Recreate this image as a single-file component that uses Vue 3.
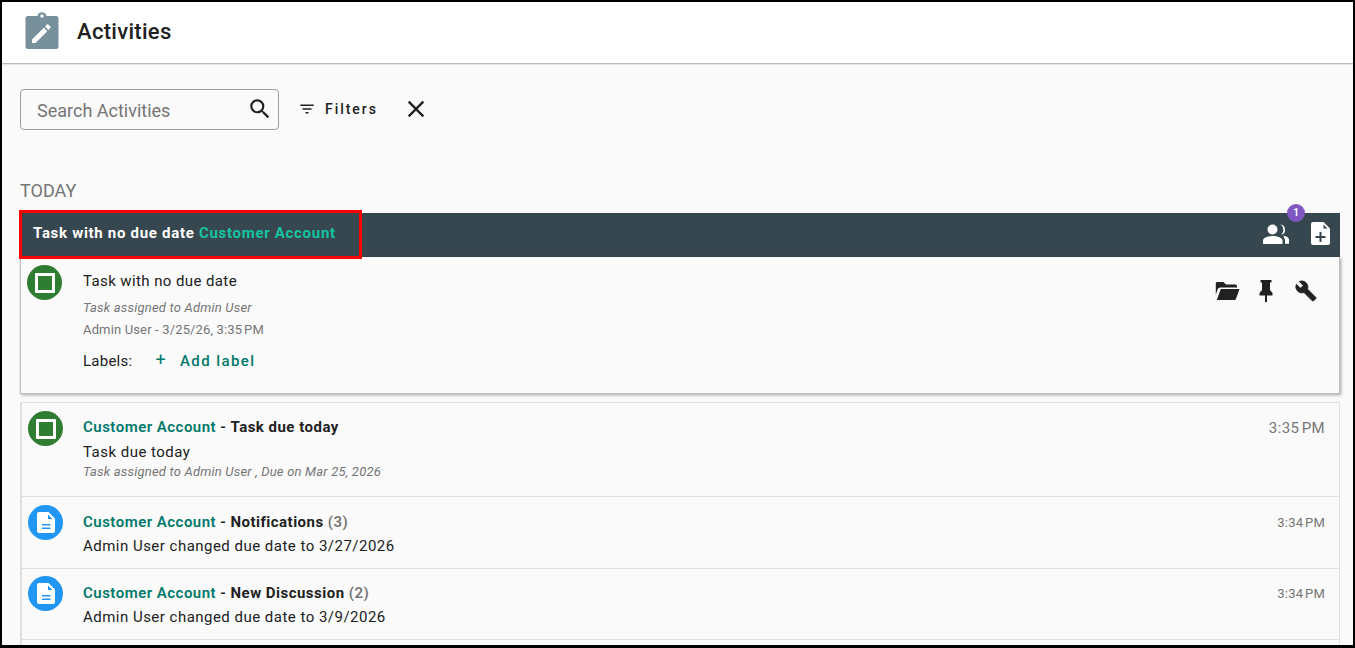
<template>
  <div class="frame">
    <header class="topbar">
      <svg class="logo" viewBox="0 0 36 38" width="36" height="38">
        <path fill="#78909c" d="M4 4h9.500a4.600 4.600 0 0 1 9 0H32a2.500 2.500 0 0 1 2.500 2.500v28A2.500 2.500 0 0 1 32 37H4a2.500 2.500 0 0 1-2.500-2.500v-28A2.500 2.500 0 0 1 4 4z" />
        <circle cx="18" cy="4" r="1.700" fill="#fff" />
        <path fill="#fff" d="M8 31v-3.500l11.800-11.800 3.500 3.500L11.500 31zM21 14.500l1.900-1.900a1 1 0 0 1 1.400 0l2.100 2.100a1 1 0 0 1 0 1.400l-1.900 1.900z" />
      </svg>
      <h1>Activities</h1>
    </header>

    <main class="content">
      <div class="toolbar">
        <div class="search">
          <span>Search Activities</span>
          <svg viewBox="0 0 24 24" width="26" height="26">
            <path fill="#212121" d="M15.500 14h-.79l-.28-.27A6.470 6.470 0 0 0 16 9.500 6.500 6.500 0 1 0 9.500 16c1.610 0 3.090-.59 4.230-1.570l.27.28v.79l5 4.990L20.490 19l-4.990-5zm-6 0C7.010 14 5 11.990 5 9.500S7.010 5 9.500 5 14 7.010 14 9.500 11.990 14 9.500 14z" />
          </svg>
        </div>
        <button class="filters">
          <svg viewBox="0 0 24 24" width="18" height="18">
            <path fill="#212121" d="M10 18h4v-2h-4v2zM3 6v2h18V6H3zm3 7h12v-2H6v2z" />
          </svg>
          Filters
        </button>
        <svg class="clear" viewBox="0 0 24 24" width="28" height="28">
          <path fill="#212121" d="M19 6.410 17.590 5 12 10.590 6.410 5 5 6.410 10.590 12 5 17.590 6.410 19 12 13.410 17.590 19 19 17.590 13.410 12z" />
        </svg>
      </div>

      <div class="day">TODAY</div>

      <section class="open-item">
        <div class="bar">
          <div class="bar-title">Task with no due date <span>Customer Account</span></div>
          <div class="bar-icons">
            <span class="people">
              <svg viewBox="0 0 26 20" width="26" height="20">
                <path fill="#fff" d="M17 .6a5.200 5.200 0 0 1 1.300 10.200 7 7 0 0 0 .1-9.900A5 5 0 0 0 17 .6zM20 11.800c3 .4 6 1.700 6 4v4h-4v-3c0-1.800-.8-3.400-2-5z" />
                <circle cx="9.500" cy="5.500" r="5" fill="#fff" />
                <path fill="#fff" d="M0 20v-3.500C0 14 4.500 12 9.500 12S19.500 14 19.500 16.500V20z" />
              </svg>
              <b>1</b>
            </span>
            <svg viewBox="0 0 19 23" width="19" height="23">
              <path fill="#fff" d="M2 0h10.500L19 6.500V21a2 2 0 0 1-2 2H2a2 2 0 0 1-2-2V2a2 2 0 0 1 2-2z" />
              <path fill="#37474f" d="M12.500 2.500 16.500 6.500H12.500zM8.500 10h2v4h4v2h-4v4h-2v-4h-4v-2h4z" />
            </svg>
          </div>
        </div>
        <div class="card">
          <span class="badge green"><i></i></span>
          <div class="card-body">
            <div class="card-title">Task with no due date</div>
            <div class="card-note">Task assigned to Admin User</div>
            <div class="card-meta">Admin User - 3/25/26, 3:35&#8239;PM</div>
            <div class="labels">
              <span>Labels:</span>
              <span class="add-label"><em>+</em>Add label</span>
            </div>
          </div>
          <div class="card-icons">
            <svg viewBox="0 0 26 20" width="26" height="20">
              <path fill="#212121" d="M3 1h6.500L12 3.500h9.500a1.500 1.500 0 0 1 1.500 1.500v1.500H6.500C5 6.500 4 7.200 3.500 8.500L1.800 14V2.500A1.500 1.500 0 0 1 3 1z" />
              <path fill="#212121" d="M6.800 8H25.500L22 17.800a1.500 1.500 0 0 1-1.500 1.200H2.800z" />
            </svg>
            <svg viewBox="0 0 16 24" width="16" height="24">
              <path fill="#212121" d="M2.500 1h11v2.500H12v7.500l2.500 3V16.500H9V23H7V16.500H1.500V14L4 11V3.500H2.500z" />
            </svg>
            <svg class="wrench" viewBox="0 0 24 24" width="22" height="22">
              <path fill="#212121" stroke="#212121" stroke-width="1" d="M22.700 19l-9.100-9.100c.9-2.300.4-5-1.500-6.900-2-2-5-2.400-7.400-1.300L9 6 6 9 1.600 4.700C.4 7.100.9 10.100 2.900 12.100c1.900 1.900 4.600 2.400 6.900 1.500l9.100 9.100c.4.400 1 .4 1.400 0l2.300-2.300c.5-.4.500-1.100.1-1.400z" />
            </svg>
          </div>
        </div>
      </section>

      <section class="list">
        <article v-for="row in rows" :key="row.title" class="row" :class="row.kind">
          <span v-if="row.kind === 'task'" class="badge green"><i></i></span>
          <span v-else class="badge blue">
            <svg viewBox="0 0 18 21" width="18" height="21">
              <path fill="#fff" d="M2 0h9.500L18 6.500V19a2 2 0 0 1-2 2H2a2 2 0 0 1-2-2V2a2 2 0 0 1 2-2z" />
              <path fill="#2196f3" d="M11 2.500 15.500 7H11zM5 12h8.500v1.500H5zM5 15.500h8.500V17H5z" />
            </svg>
          </span>
          <div class="row-body">
            <div class="row-title">
              <span class="account">Customer Account</span> - <strong>{{ row.title }}</strong>
              <span v-if="row.count" class="count"> ({{ row.count }})</span>
            </div>
            <div class="row-text">{{ row.text }}</div>
            <div v-if="row.note" class="row-note">{{ row.note }}</div>
          </div>
          <time>{{ row.time }}</time>
        </article>
      </section>
    </main>

    <div class="callout"></div>
  </div>
</template>

<script setup>
const rows = [
  {
    kind: 'task',
    title: 'Task due today',
    text: 'Task due today',
    note: 'Task assigned to Admin User , Due on Mar 25, 2026',
    time: '3:35\u202FPM'
  },
  {
    kind: 'doc',
    title: 'Notifications',
    count: 3,
    text: 'Admin User changed due date to 3/27/2026',
    time: '3:34\u202FPM'
  },
  {
    kind: 'doc',
    title: 'New Discussion',
    count: 2,
    text: 'Admin User changed due date to 3/9/2026',
    time: '3:34\u202FPM'
  }
]
</script>

<style>
html, body {
  margin: 0;
  height: 100%;
  overflow: hidden;
}
</style>

<style scoped>
.frame {
  position: relative;
  box-sizing: border-box;
  height: 648px;
  border: 2px solid #000;
  border-bottom-width: 3px;
  overflow: hidden;
  background: #fafafa;
  font-family: Roboto, "Liberation Sans", sans-serif;
  color: #212121;
}
.topbar {
  display: flex;
  align-items: center;
  height: 61px;
  padding-left: 22px;
  background: #fff;
  border-bottom: 1px solid #bdbdbd;
  box-shadow: 0 1px 1px rgba(0, 0, 0, 0.08);
}
.logo {
  margin-top: -3px;
}
.topbar h1 {
  margin: -2px 0 0 17px;
  font-size: 22px;
  font-weight: 500;
  letter-spacing: 0.3px;
  color: #212121;
}
.content {
  padding: 25px 13px 0 18px;
}
.toolbar {
  display: flex;
  align-items: center;
  height: 41px;
}
.search {
  box-sizing: border-box;
  display: flex;
  align-items: center;
  justify-content: space-between;
  width: 259px;
  height: 41px;
  padding: 0 5px 0 16px;
  border: 1px solid #9e9e9e;
  border-radius: 4px;
  font-size: 18px;
  color: #757575;
}
.search span {
  margin-top: 2px;
}
.search svg {
  margin-top: -2px;
}
.filters {
  display: flex;
  align-items: center;
  gap: 9px;
  margin: -2px 0 0 19px;
  padding: 0;
  border: 0;
  background: none;
  font: 500 14px Roboto, sans-serif;
  letter-spacing: 1.95px;
  color: #212121;
}
.clear {
  margin: -2px 0 0 24px;
}
.day {
  margin-top: 50px;
  font-size: 18px;
  line-height: 22px;
  color: #757575;
}
.open-item {
  margin-top: 11px;
}
.bar {
  display: flex;
  align-items: center;
  justify-content: space-between;
  height: 44px;
  padding: 0 10px 0 13px;
  background: #37474f;
}
.bar-title {
  margin-top: -4px;
  font-size: 15px;
  font-weight: 700;
  letter-spacing: 0.7px;
  color: #fff;
}
.bar-title span {
  color: #14c4a2;
}
.bar-icons {
  display: flex;
  align-items: flex-start;
  gap: 22px;
  height: 44px;
  padding-top: 9px;
  box-sizing: border-box;
}
.people {
  position: relative;
  display: flex;
  margin-top: 2px;
}
.people b {
  position: absolute;
  top: -20px;
  right: -16px;
  width: 18px;
  height: 18px;
  border-radius: 50%;
  background: #7e57c2;
  color: #fff;
  font-size: 10px;
  font-weight: 700;
  line-height: 18px;
  text-align: center;
}
.card {
  box-sizing: border-box;
  display: flex;
  height: 137px;
  padding: 8px 10px 0 6px;
  background: #fafafa;
  border: 1px solid #bdbdbd;
  border-top: 0;
  box-shadow: 1px 1px 3px rgba(0, 0, 0, 0.35);
}
.badge {
  flex: none;
  display: flex;
  align-items: center;
  justify-content: center;
  width: 35px;
  height: 35px;
  border-radius: 50%;
}
.green {
  background: #2e7d32;
}
.green i {
  box-sizing: border-box;
  width: 20px;
  height: 20px;
  border: 3px solid #fff;
  border-radius: 1px;
}
.blue {
  background: #2196f3;
}
.card-body {
  flex: 1;
  margin-left: 21px;
}
.card-title {
  margin-top: 6px;
  font-size: 15px;
  line-height: 20px;
  letter-spacing: 0.4px;
}
.card-note {
  margin-top: 8px;
  font-size: 13px;
  line-height: 18px;
  letter-spacing: 0.2px;
  font-style: italic;
  color: #757575;
}
.card-meta {
  margin-top: 4px;
  font-size: 13px;
  line-height: 18px;
  letter-spacing: 0.15px;
  color: #757575;
}
.labels {
  display: flex;
  align-items: center;
  margin-top: 12px;
  font-size: 15px;
  line-height: 20px;
  letter-spacing: 0.25px;
}
.add-label {
  margin-left: 23px;
  font-weight: 500;
  letter-spacing: 1.4px;
  color: #00796b;
}
.add-label em {
  margin-right: 13px;
  font-style: normal;
  font-size: 18px;
  font-weight: 400;
  line-height: 18px;
}
.card-icons {
  display: flex;
  align-items: center;
  gap: 18px;
  height: 28px;
  margin: 12px 12px 0 0;
}
.wrench {
  margin-left: 3px;
}
.list {
  margin: 8px 0 0;
  padding-bottom: 30px;
  border: 1px solid #e0e0e0;
  border-left-width: 2px;
  border-bottom: 0;
}
.row {
  box-sizing: border-box;
  display: flex;
  height: 72px;
  padding: 8px 14px 0 6px;
  border-bottom: 1px solid #e0e0e0;
}
.row.task {
  height: 94px;
}
.row.doc + .row.doc {
  height: 71px;
  padding-top: 7px;
}
.row-body {
  flex: 1;
  margin-left: 20px;
}
.row-title {
  margin-top: 6px;
  font-size: 15px;
  line-height: 20px;
  font-weight: 600;
  letter-spacing: 0.48px;
}
.doc .row-title {
  margin-top: 7px;
}
.row-title strong {
  font-weight: 700;
}
.account {
  color: #00796b;
}
.count {
  color: #757575;
}
.row-text {
  margin-top: 5px;
  font-size: 15px;
  line-height: 20px;
  letter-spacing: 0.48px;
}
.doc .row-text {
  margin-top: 4px;
}
.row-note {
  margin-top: 1px;
  font-size: 13px;
  line-height: 18px;
  letter-spacing: 0.2px;
  font-style: italic;
  color: #757575;
}
time {
  margin-top: 9px;
  font-size: 13px;
  line-height: 18px;
  letter-spacing: 0.2px;
  color: #757575;
}
.task time {
  margin-top: 8px;
  font-size: 15px;
  letter-spacing: 0.4px;
}
.callout {
  position: absolute;
  left: 17px;
  top: 208px;
  box-sizing: border-box;
  width: 343px;
  height: 49px;
  border: 3px solid #f00;
}
</style>
